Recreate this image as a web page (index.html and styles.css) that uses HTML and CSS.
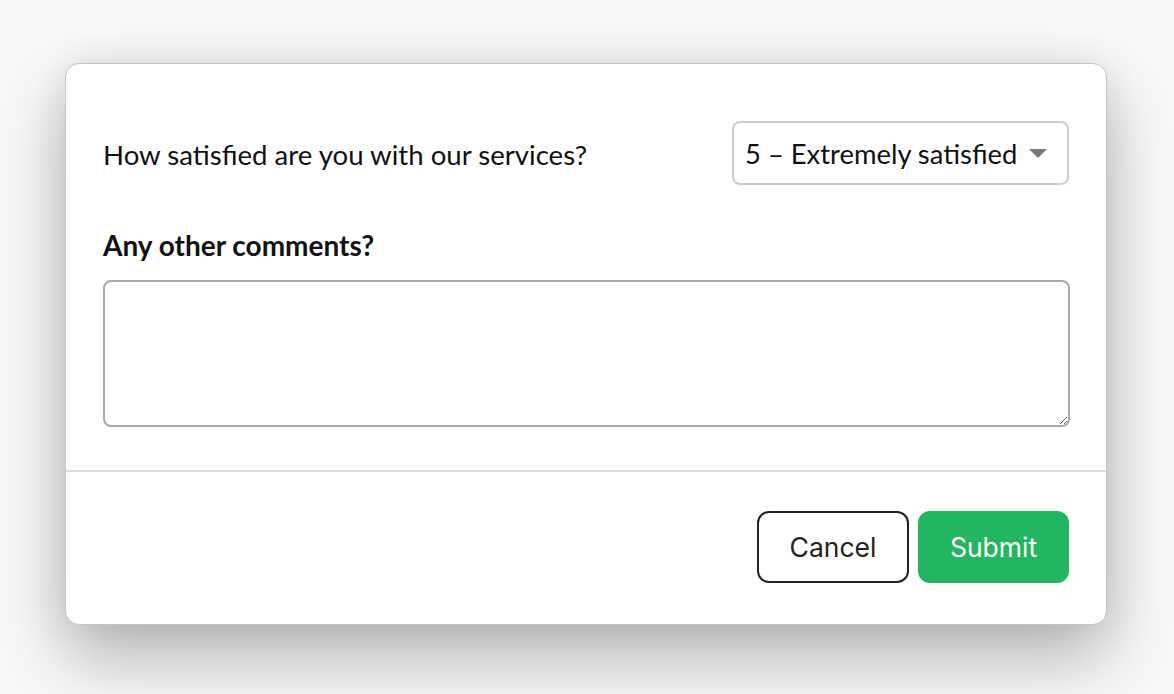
FILE: index.html
```
<!DOCTYPE html>
<html>
<head>
<meta charset="utf-8">
<link rel="stylesheet" href="styles.css">
</head>
<body>
<div class="dialog">
  <div class="dialog-body">
    <div class="row">
      <label class="q-label">How satisfied are you with our services?</label>
      <div class="select">
        <span class="select-text">5 – Extremely satisfied</span>
        <svg class="caret" width="18" height="9" viewBox="0 0 18 9"><path d="M0 0 H18 L9 9 Z" fill="#7a7a7a"/></svg>
      </div>
    </div>
    <label class="c-label">Any other comments?</label>
    <textarea class="comments"></textarea>
  </div>
  <div class="dialog-footer">
    <button class="btn btn-cancel">Cancel</button>
    <button class="btn btn-submit">Submit</button>
  </div>
</div>
</body>
</html>
```
FILE: styles.css
```
html, body {
  margin: 0;
  padding: 0;
}
body {
  width: 1174px;
  height: 694px;
  background: #f7f8fa;
  font-family: Lato, "Noto Sans", sans-serif;
  color: #111;
  overflow: hidden;
}
.dialog {
  box-sizing: border-box;
  margin: 63px 0 0 65px;
  width: 1042px;
  height: 562px;
  background: #fff;
  border: 1px solid #c4c4c4;
  border-radius: 14px;
  box-shadow: 0 32px 70px rgba(0, 0, 0, 0.28), 0 0 36px rgba(0, 0, 0, 0.07);
  display: flex;
  flex-direction: column;
}
.dialog-body {
  padding: 57px 37px 43px 37px;
  border-bottom: 2px solid #dcdcdc;
}
.row {
  display: flex;
  justify-content: space-between;
  align-items: center;
}
.q-label {
  font-size: 27.6px;
  line-height: 34px;
  color: #111;
  margin-top: 3px;
}
.select {
  box-sizing: border-box;
  width: 337px;
  height: 64px;
  border: 2px solid #cdcdcd;
  border-radius: 8px;
  display: flex;
  align-items: center;
  padding: 0 20px 0 11px;
  justify-content: space-between;
}
.select-text {
  font-size: 27.4px;
  color: #111;
}
.caret {
  display: block;
}
.c-label {
  display: block;
  font-weight: 700;
  font-size: 28px;
  line-height: 34px;
  margin-top: 43px;
  color: #111;
}
.comments {
  display: block;
  box-sizing: border-box;
  width: 967px;
  height: 147px;
  margin-top: 18px;
  border: 2px solid #a8a8a8;
  border-radius: 8px;
  resize: vertical;
  font-family: Lato, sans-serif;
  font-size: 24px;
  outline: none;
}
.dialog-footer {
  display: flex;
  justify-content: flex-end;
  gap: 9px;
  padding: 39px 37px 0 0;
}
.btn {
  box-sizing: border-box;
  height: 72px;
  border-radius: 12px;
  font-family: Inter, "Noto Sans", sans-serif;
  font-size: 26.5px;
  cursor: pointer;
}
.btn-cancel {
  width: 152px;
  background: #fff;
  border: 2px solid #222;
  color: #222;
}
.btn-submit {
  width: 151px;
  background: #21b65f;
  border: none;
  color: #fff;
}
```
